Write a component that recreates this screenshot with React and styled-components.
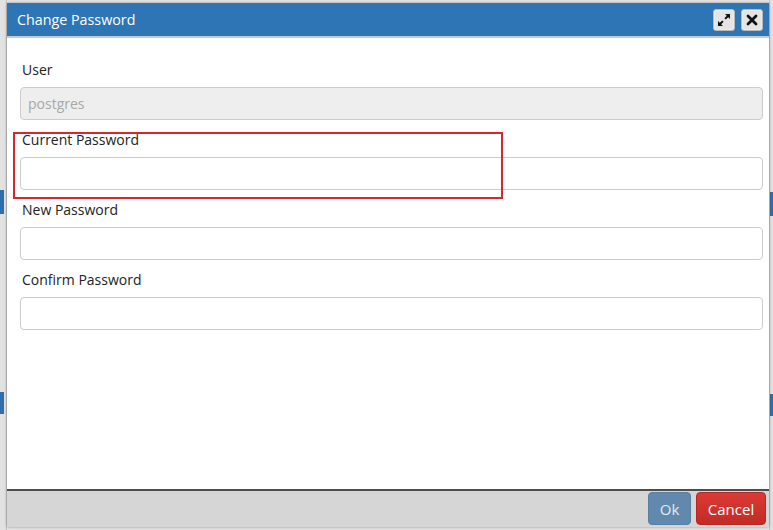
import React from "react";
import styled, { createGlobalStyle } from "styled-components";

const GlobalStyle = createGlobalStyle`
  html, body {
    margin: 0;
    padding: 0;
    background: #e4e4e4;
    font-family: "Open Sans", "Noto Sans", sans-serif;
  }
`;

const Page = styled.div`
  display: flex;
  height: 530px;
  width: 773px;
  overflow: hidden;
  background: #e6e6e6;
`;

const Side = styled.div`
  width: ${(p) => p.width}px;
  display: flex;
  flex-direction: column;
  background: #e2e2e2;
  border-${(p) => (p.right ? "left" : "right")}: 1px solid #c4c4c4;
`;

const Strip = styled.div`
  margin-top: ${(p) => p.top}px;
  height: ${(p) => p.height}px;
  width: 4px;
  margin-left: ${(p) => (p.right ? "auto" : "0")};
  background: #2f6ea8;
`;

const Dialog = styled.div`
  position: relative;
  width: 762px;
  margin-top: 3px;
  height: 524px;
  display: flex;
  flex-direction: column;
  background: #fff;
  box-shadow: 0 0 3px rgba(0, 0, 0, 0.35);
`;

const Header = styled.div`
  height: 33px;
  display: flex;
  align-items: center;
  padding: 0 6px 0 10px;
  background: #2d75b4;
  border-bottom: 2px solid #c9c9c9;
`;

const Title = styled.div`
  flex: 1;
  color: #fff;
  font-size: 14.3px;
`;

const HeadButtons = styled.div`
  display: flex;
  gap: 6px;
`;

const IconButton = styled.button`
  width: 22px;
  height: 22px;
  padding: 0;
  display: flex;
  align-items: center;
  justify-content: center;
  background: #e4e4e4;
  border: 1px solid #b8b8b8;
  border-radius: 3px;
  box-shadow: inset 0 0 2px #fff;
`;

const Body = styled.div`
  flex: 1;
  padding: 23px 6px 0 13px;
  display: flex;
  flex-direction: column;
`;

const Group = styled.div`
  display: flex;
  flex-direction: column;
  margin-bottom: 11px;
`;

const Label = styled.label`
  margin-left: 2px;
  font-size: 14px;
  line-height: 18px;
  color: #222;
  margin-bottom: 8px;
`;

const Input = styled.input`
  box-sizing: border-box;
  height: 33px;
  width: 100%;
  border: 1px solid #cccccc;
  border-radius: 4px;
  padding: 0 7px;
  font-family: "Open Sans", "Noto Sans", sans-serif;
  font-size: 14px;
  color: #a8a8a8;
  background: ${(p) => (p.disabled ? "#eeeeee" : "#fff")};
  outline: none;
`;

const Footer = styled.div`
  height: 35px;
  border-top: 2px solid #4d4d4d;
  background: #d6d6d6;
  display: flex;
  justify-content: flex-end;
  align-items: center;
  gap: 5px;
  padding: 0 3px 1px 0;
`;

const Button = styled.button`
  height: 33px;
  width: ${(p) => (p.danger ? 70 : 43)}px;
  padding: 0;
  border-radius: 4px;
  font-family: "Open Sans", "Noto Sans", sans-serif;
  font-size: 15px;
  color: ${(p) => (p.danger ? "#fff" : "#e3e9f0")};
  border: 1px solid ${(p) => (p.danger ? "#b02924" : "#58809f")};
  background: ${(p) =>
    p.danger
      ? "linear-gradient(#da3a35, #c42b26)"
      : "#6189ad"};
`;

const Highlight = styled.div`
  position: absolute;
  left: 6px;
  top: 129px;
  width: 486px;
  height: 63px;
  border: 2px solid #d8262f;
  pointer-events: none;
`;

const ExpandIcon = () => (
  <svg width="14" height="14" viewBox="0 0 14 14">
    <path d="M8 1h5v5l-1.8-1.8-2.4 2.4-1.4-1.4 2.4-2.4z" fill="#111" />
    <path d="M6 13H1V8l1.8 1.8 2.4-2.4 1.4 1.4-2.4 2.4z" fill="#111" />
  </svg>
);

const CloseIcon = () => (
  <svg width="12" height="12" viewBox="0 0 12 12">
    <path d="M2 2l8 8M10 2l-8 8" stroke="#111" strokeWidth="2.8" strokeLinecap="round" />
  </svg>
);

const fields = ["Current Password", "New Password", "Confirm Password"];

export default function App() {
  return (
    <>
      <GlobalStyle />
      <Page>
        <Side width={6}>
          <Strip top={190} height={24} />
          <Strip top={178} height={22} />
        </Side>
        <Dialog>
          <Header>
            <Title>Change Password</Title>
            <HeadButtons>
              <IconButton>
                <ExpandIcon />
              </IconButton>
              <IconButton>
                <CloseIcon />
              </IconButton>
            </HeadButtons>
          </Header>
          <Body>
            <Group>
              <Label>User</Label>
              <Input disabled defaultValue="postgres" />
            </Group>
            {fields.map((f) => (
              <Group key={f}>
                <Label>{f}</Label>
                <Input type="password" />
              </Group>
            ))}
          </Body>
          <Footer>
            <Button>Ok</Button>
            <Button danger>Cancel</Button>
          </Footer>
          <Highlight />
        </Dialog>
        <Side width={3} right>
          <Strip right top={192} height={24} />
          <Strip right top={178} height={22} />
        </Side>
      </Page>
    </>
  );
}
